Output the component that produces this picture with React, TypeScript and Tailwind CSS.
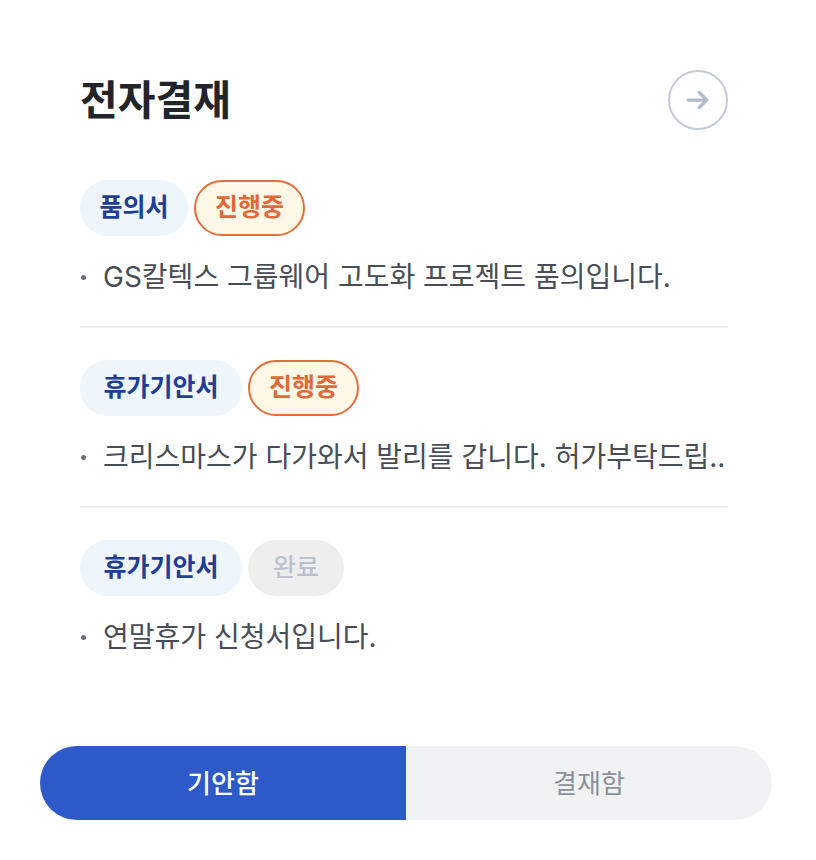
import React from "react";

type Item = {
  type: string;
  typeW: string;
  status: "progress" | "done";
  text: string;
};

const items: Item[] = [
  { type: "품의서", typeW: "w-[108px]", status: "progress", text: "GS칼텍스 그룹웨어 고도화 프로젝트 품의입니다." },
  { type: "휴가기안서", typeW: "w-[162px]", status: "progress", text: "크리스마스가 다가와서 발리를 갑니다. 허가부탁드립.." },
  { type: "휴가기안서", typeW: "w-[162px]", status: "done", text: "연말휴가 신청서입니다." },
];

export default function App() {
  return (
    <div
      className="w-[816px] h-[860px] bg-white"
      style={{ fontFamily: '"Inter", "Noto Sans CJK KR", sans-serif' }}
    >
      <div className="ml-20 w-[648px] pt-[70px]">
        <div className="flex items-center justify-between h-[60px]">
          <h1 className="text-[41px] font-bold text-[#222429] leading-none">전자결재</h1>
          <div className="w-[60px] h-[60px] rounded-full border-2 border-[#c3cad8] flex items-center justify-center">
            <svg width="30" height="30" viewBox="0 0 24 24" fill="none" stroke="#b3bccc" strokeWidth="2.6" strokeLinecap="round" strokeLinejoin="round">
              <path d="M4 12h15" />
              <path d="M13 6l6 6-6 6" />
            </svg>
          </div>
        </div>
        <div className="mt-[50px] flex flex-col">
          {items.map((it, i) => (
            <div
              key={i}
              className={
                (i > 0 ? "pt-[32px] " : "") +
                (i < items.length - 1 ? "pb-[31px] border-b-2 border-[#eeeff1]" : "")
              }
            >
              <div className="flex gap-1.5 h-14">
                <span className={it.typeW + " h-14 rounded-full bg-[#eef5fb] text-[#1f3e96] text-[25px] font-semibold flex items-center justify-center"}>
                  {it.type}
                </span>
                {it.status === "progress" ? (
                  <span className="w-[111px] h-14 rounded-full border-2 border-[#e2703c] bg-[#fff8e7] text-[#e0683a] text-[25px] font-semibold flex items-center justify-center">
                    진행중
                  </span>
                ) : (
                  <span className="w-[96px] h-14 rounded-full bg-[#eeeeef] text-[#bac1cf] text-[25px] font-medium flex items-center justify-center">
                    완료
                  </span>
                )}
              </div>
              <div className="mt-[23px] h-9 flex items-center">
                <span className="w-[5px] h-[5px] rounded-full bg-[#6b7079] ml-[1px] mr-[17px]" />
                <span className="text-[28px] text-[#484d56] leading-9 whitespace-nowrap">{it.text}</span>
              </div>
            </div>
          ))}
        </div>
      </div>
      <div className="mt-[91px] ml-10 w-[732px] h-[74px] flex">
        <div className="flex-1 rounded-l-full bg-[#2d59c9] text-white text-[26px] font-medium flex items-center justify-center">
          기안함
        </div>
        <div className="flex-1 rounded-r-full bg-[#f1f2f4] text-[#8b9099] text-[26px] flex items-center justify-center">
          결재함
        </div>
      </div>
    </div>
  );
}
